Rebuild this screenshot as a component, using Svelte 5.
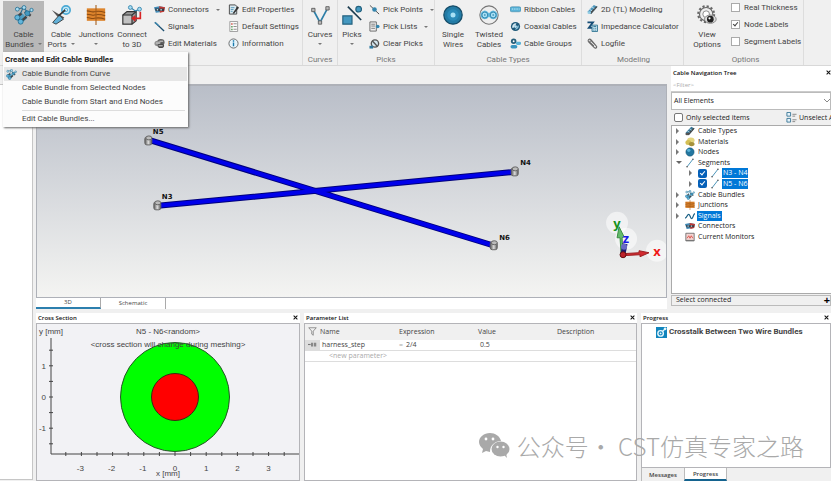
<script lang="ts">
	type TreeRow = {
		label: string;
		icon: string;
		arrow?: 'open' | 'closed';
		child?: boolean;
		selected?: boolean;
	};

	const menuItems = [
		{ label: 'Cable Bundle from Curve', icon: 'bundle', active: true },
		{ label: 'Cable Bundle from Selected Nodes' },
		{ label: 'Cable Bundle from Start and End Nodes' }
	];

	const rows: TreeRow[] = [
		{ label: 'Cable Types', icon: 'types', arrow: 'closed' },
		{ label: 'Materials', icon: 'gold', arrow: 'closed' },
		{ label: 'Nodes', icon: 'ball', arrow: 'closed' },
		{ label: 'Segments', icon: 'segment', arrow: 'open' },
		{ label: 'N3 - N4', icon: 'segment', arrow: 'closed', child: true, selected: true },
		{ label: 'N5 - N6', icon: 'segment', arrow: 'closed', child: true, selected: true },
		{ label: 'Cable Bundles', icon: 'bundle', arrow: 'closed' },
		{ label: 'Junctions', icon: 'junction', arrow: 'closed' },
		{ label: 'Signals', icon: 'wave', arrow: 'closed', selected: true },
		{ label: 'Connectors', icon: 'connector' },
		{ label: 'Current Monitors', icon: 'monitor' }
	];

	const nodes = [
		{ name: 'N5', x: 112, y: 55, lx: 116, ly: 48 },
		{ name: 'N3', x: 121, y: 120, lx: 125, ly: 113 },
		{ name: 'N4', x: 479, y: 86, lx: 484, ly: 79 },
		{ name: 'N6', x: 458, y: 160, lx: 463, ly: 154 }
	];

	const unit = 31.2;
	const xTicks = Array.from({ length: 15 }, (_, i) => (i - 7) / 2);
	const yTicks = Array.from({ length: 7 }, (_, i) => (i - 3) / 2);
	const xLabels = [-3, -2, -1, 0, 1, 2, 3];
	const yLabels = [1, 0, -1];

	let filter = $state('');
	let onlySelected = $state(false);
	let checks = $state([
		{ label: 'Real Thickness', on: false },
		{ label: 'Node Labels', on: true },
		{ label: 'Segment Labels', on: false }
	]);
</script>

{#snippet icon(name: string)}
	<svg class="icon" viewBox="0 0 24 24" fill="none" aria-hidden="true">
		{#if name === 'bundle'}
			<path d="M2 17l8-7 6 6-7 6z" fill="#4f9fc4" />
			<path d="M3 15l6-5M7 21l8-7M13 8l7 5" stroke="#444" stroke-width="3" />
			<circle cx="4" cy="15" r="3" fill="#62b6dc" stroke="#276f92" />
			<circle cx="8" cy="20" r="3" fill="#62b6dc" stroke="#276f92" />
			<path d="M4 5l7-2 6 6 5-3M8 10l3-7" stroke="#276f92" stroke-width="1.3" />
			<circle cx="4" cy="5" r="2.3" fill="#a9dcf2" stroke="#276f92" />
			<circle cx="12" cy="3" r="2.3" fill="#a9dcf2" stroke="#276f92" />
			<circle cx="16" cy="10" r="3" fill="#4499c0" stroke="#276f92" />
			<circle cx="21" cy="6" r="2" fill="#a9dcf2" stroke="#276f92" />
		{:else if name === 'ports'}
			<circle cx="18" cy="6" r="5" fill="#c7e9f7" stroke="#4aa9d4" stroke-width="2" />
			<circle cx="18" cy="6" r="2" stroke="#4aa9d4" />
			<path d="M1 6l15 9-4 4z" fill="#555" />
			<path d="M2 21l8-9 5 5-9 6z" fill="#62b1d8" stroke="#333" />
			<path d="M9 13l8-7" stroke="#333" stroke-width="2" />
		{:else if name === 'junction'}
			<path d="M1 4h22v15H1z" fill="#dd842c" />
			<path d="M1 7c5 0 5 2 9 1s7-1 13 1M1 11c5 0 5 2 9 1s7-1 13 1M1 15c5 0 5 2 9 1s7-1 13 1" stroke="#8d4c12" stroke-width="1.3" />
			<path d="M12 0v24" stroke="#a65f1c" stroke-width="1.3" />
		{:else if name === 'connect3d'}
			<path d="M1 12l5-4h11v11l-5 4H1z" fill="#999" stroke="#333" stroke-width="1.4" />
			<path d="M1 12h11v11M12 12l5-4" stroke="#333" stroke-width="1.4" />
			<path d="M2 13h9v9H2z" fill="#c1c1c1" />
			<path d="M10 3l6 4 6-2" stroke="#2d7fa8" stroke-width="1.3" />
			<path d="M22 8v8h-7" stroke="#d82424" stroke-width="2" />
			<path d="M16 12v8l-5-4z" fill="#d82424" />
			<circle cx="10" cy="3" r="2.3" fill="#a9dcf2" stroke="#2d7fa8" />
			<circle cx="21" cy="5" r="2.3" fill="#a9dcf2" stroke="#2d7fa8" />
		{:else if name === 'connector'}
			<path d="M0 7l12-2 12 2-3 10-17 2z" fill="#3f89b5" />
			<path d="M11 5l13 2-2 10-9 2z" fill="#c43a34" />
			<path d="M2 10h20v5H4z" fill="#343c46" />
			<path d="M6 11h3v3H6zM14 11h3v3h-3z" fill="#b9d8e7" />
		{:else if name === 'line'}
			<path d="M2 3l20 19" stroke="#1c4f70" stroke-width="3" />
			<path d="M2 3l9 8" stroke="#3d85ac" stroke-width="3" />
		{:else if name === 'material'}
			<ellipse cx="15" cy="9" rx="8" ry="7" fill="#616161" />
			<ellipse cx="8" cy="12" rx="7" ry="6" fill="#8e8e8e" />
			<ellipse cx="15" cy="17" rx="7" ry="5" fill="#4b4b4b" />
			<path d="M4 11h9M10 17h9M12 7h8" stroke="#ddd" stroke-width="2" />
		{:else if name === 'edit'}
			<path d="M3 2h13l3 3v17H3z" fill="#d9e8ef" stroke="#444" stroke-width="2" />
			<path d="M6 8h8M6 12h6M6 16h4" stroke="#5498b9" stroke-width="2" />
			<path d="M10 20l11-15 3 3-11 13z" fill="#333" />
		{:else if name === 'settings'}
			<path d="M4 1h17v22H4z" fill="#fafafa" stroke="#999" stroke-width="2" />
			<path d="M12 6h7M12 12h7M12 18h7" stroke="#888" stroke-width="2" />
			<path d="M7 5h3v3H7z" fill="#cc4438" /><path d="M7 11h3v3H7zM7 17h3v3H7z" fill="#4f944d" />
		{:else if name === 'info'}
			<circle cx="12" cy="12" r="10" fill="#e5f3fa" stroke="#666" stroke-width="2" />
			<path d="M12 10v8M12 5v3" stroke="#1679ad" stroke-width="3" />
		{:else if name === 'curves'}
			<path d="M4 6l8 15 9-17" stroke="#2d7fa8" stroke-width="2" />
			<path d="M2 4h4v4H2zM10 19h4v4h-4zM19 2h4v4h-4z" fill="#bbb" stroke="#555" />
		{:else if name === 'picks'}
			<path d="M1 13h11v10H1z" fill="#4498c0" stroke="#24627f" stroke-width="1.4" />
			<path d="M7 2l16 16" stroke="#1d3d50" stroke-width="2" />
			<circle cx="20" cy="5" r="3.4" fill="#4498c0" stroke="#24627f" stroke-width="1.4" />
		{:else if name === 'pickpoint'}
			<path d="M2 3l20 19" stroke="#444" stroke-width="2" />
			<circle cx="12" cy="12" r="5" fill="#3485ad" />
		{:else if name === 'picklist'}
			<path d="M2 2h14v20H2z" fill="#eee" stroke="#666" stroke-width="2" />
			<path d="M5 7h8M5 11h8M5 16h8" stroke="#777" stroke-width="2" />
			<circle cx="19" cy="12" r="4" fill="#3485ad" />
		{:else if name === 'clear'}
			<circle cx="13" cy="12" r="8" fill="#d5e6ee" stroke="#555" stroke-width="3" />
			<path d="M7 6l12 13" stroke="#555" stroke-width="3" />
			<path d="M1 17h8v6H1z" fill="#2e78a0" />
		{:else if name === 'single'}
			<circle cx="12" cy="12" r="11" fill="#237ba5" stroke="#164d69" stroke-width="1.5" />
			<circle cx="12" cy="12" r="7" fill="#2b8bb9" />
			<circle cx="12" cy="12" r="3" fill="#a8e0f5" />
		{:else if name === 'twisted'}
			<circle cx="12" cy="12" r="11" fill="#eee" stroke="#777" stroke-width="1.3" />
			<path d="M2 10q5-7 10 0 5-7 10 0v4q-5 6-10 0-5 6-10 0z" fill="#62b8dc" />
			<circle cx="7" cy="12" r="3.5" fill="#a8e0f5" stroke="#237ba5" />
			<circle cx="17" cy="12" r="3.5" fill="#a8e0f5" stroke="#237ba5" />
			<circle cx="7" cy="12" r="1" fill="#237ba5" /><circle cx="17" cy="12" r="1" fill="#237ba5" />
		{:else if name === 'ribbon'}
			<rect x="0" y="6" width="24" height="11" rx="4" fill="#59b2d7" stroke="#2a7497" />
			<path d="M4 11h3M9 11h3M14 11h3M19 11h2" stroke="#c9effb" stroke-width="2" />
		{:else if name === 'coax'}
			<circle cx="12" cy="12" r="10" fill="#1e5979" />
			<path d="M5 15a8 8 0 0 1 9-10l-2 4a4 4 0 0 0-3 5z" fill="#d5e8f0" />
			<path d="M19 9a8 8 0 0 1-8 10l2-4a4 4 0 0 0 3-4z" fill="#8cc3dc" />
			<circle cx="12" cy="12" r="3" fill="#bfe6f5" />
		{:else if name === 'groups'}
			<circle cx="8" cy="7" r="6" fill="#265f7c" /><circle cx="8" cy="7" r="2" fill="#fff" />
			<rect x="13" y="8" width="11" height="7" rx="3" fill="#59b2d7" />
			<rect x="1" y="15" width="15" height="8" rx="4" fill="#3995c0" />
		{:else if name === 'tl' || name === 'types'}
			<path d="M1 17L15 2l8 4L9 22z" fill={name === 'tl' ? '#4c96bc' : '#3a7797'} />
			<path d="M9 22L23 6l-3-1L5 20z" fill="#4a4a4a" />
			<path d="M5 11l6 4M10 6l6 4" stroke="#b8ddec" stroke-width="2" />
			<ellipse cx="5" cy="19" rx="4" ry="3" fill={name === 'tl' ? '#92cce4' : '#555'} />
		{:else if name === 'impedance'}
			<path d="M1 3h12L4 15h8" stroke="#164d76" stroke-width="4" />
			<path d="M11 9h12v14H11z" fill="#bfe0ed" stroke="#337694" stroke-width="2" />
			<path d="M14 12h6M14 16h2M18 16h2M14 20h2M18 20h2" stroke="#337694" stroke-width="2" />
		{:else if name === 'clip'}
			<path d="M20 17L9 4C5 0 0 5 4 9l12 12c3 3 7-1 4-4L10 7c-2-2-5 0-3 3l8 8" stroke="#666" stroke-width="2.4" />
		{:else if name === 'gear'}
			<circle cx="11" cy="11" r="9.5" stroke="#666" stroke-width="2.6" stroke-dasharray="2.6 2.4" />
			<circle cx="11" cy="11" r="8" fill="#eee" stroke="#666" stroke-width="1.4" />
			<circle cx="11" cy="11" r="4" fill="#fff" stroke="#777" />
			<ellipse cx="16" cy="17" rx="7" ry="5" fill="#ddd" stroke="#777" />
			<circle cx="16" cy="17" r="4" fill="#222" /><circle cx="15" cy="16" r="1.3" fill="#fff" />
		{:else if name === 'gold'}
			<ellipse cx="14" cy="8" rx="9" ry="7" fill="#e3d580" />
			<ellipse cx="8" cy="13" rx="7" ry="6" fill="#d4bf54" />
			<ellipse cx="16" cy="17" rx="7" ry="5" fill="#a6923c" />
		{:else if name === 'ball'}
			<circle cx="12" cy="12" r="10" fill="#23769f" stroke="#164d69" />
			<circle cx="9" cy="8" r="4" fill="#5bb4da" />
		{:else if name === 'segment'}
			<path d="M5 21L19 3" stroke="#2a81ac" stroke-width="2" />
			<circle cx="5" cy="21" r="2" fill="#555" /><circle cx="19" cy="3" r="2" fill="#555" />
		{:else if name === 'wave'}
			<path d="M0 17c5 0 5-9 9-9s3 10 7 10 3-10 8-12" stroke="#175e84" stroke-width="3" />
		{:else if name === 'monitor'}
			<path d="M2 3h20v18H2z" fill="#f3d6d3" stroke="#666" stroke-width="2" />
			<path d="M5 15l4-6 3 6 3-6 4 6" stroke="#d9443d" stroke-width="2" />
			<path d="M2 19h20v3H2z" fill="#777" />
		{:else if name === 'project'}
			<path d="M0 0h24v24H0z" fill="#1185bd" />
			<circle cx="10" cy="14" r="6" stroke="#e7f7fd" stroke-width="3" />
			<circle cx="10" cy="14" r="2" fill="#e7f7fd" />
			<path d="M15 9l5-5" stroke="#e7f7fd" stroke-width="3" /><circle cx="20" cy="4" r="3" fill="#e7f7fd" />
		{:else if name === 'funnel'}
			<path d="M2 2h20l-8 9v11l-4-3v-8z" stroke="#777" stroke-width="2" />
		{:else if name === 'param'}
			<path d="M0 12h7" stroke="#777" stroke-width="3" />
			<path d="M8 7h6v10H8zM16 7h6v10h-6z" fill="#888" />
		{:else if name === 'unselect'}
			<path d="M2 1h8v8H2zM2 14h8v8H2z" fill="#e5f3fa" stroke="#3a7797" stroke-width="2" />
			<path d="M14 5h9M14 9h6M14 17h9M14 21h6" stroke="#666" stroke-width="1.6" />
		{:else if name === 'close'}
			<path d="M3 3l18 18M21 3L3 21" stroke="#111" stroke-width="5" />
		{/if}
	</svg>
{/snippet}

{#snippet big(name: string, first: string, second = '', menu = false, pressed = false)}
	<button class="big" class:pressed>
		{@render icon(name)}
		<span>{first}</span>
		<span class="second" class:lone={!second}>{second}{#if menu}<i class="caret"></i>{/if}</span>
	</button>
{/snippet}

{#snippet small(name: string, label: string, menu = false)}
	<button class="small">
		{@render icon(name)}
		<span>{label}</span>
		{#if menu}<i class="caret"></i>{/if}
	</button>
{/snippet}

{#snippet panelTitle(text: string)}
	<header class="panel-title">
		<h2>{text}</h2>
		<button class="close" aria-label="Close {text}">{@render icon('close')}</button>
	</header>
{/snippet}

<div class="app">
	<nav class="ribbon" aria-label="Ribbon">
		<section class="group edit">
			<div class="tools">
				{@render big('bundle', 'Cable', 'Bundles', true, true)}
				{@render big('ports', 'Cable', 'Ports', true)}
				{@render big('junction', 'Junctions', '', true)}
				{@render big('connect3d', 'Connect', 'to 3D')}
				<div class="stack">
					{@render small('connector', 'Connectors', true)}
					{@render small('line', 'Signals')}
					{@render small('material', 'Edit Materials')}
				</div>
				<div class="stack">
					{@render small('edit', 'Edit Properties')}
					{@render small('settings', 'Default Settings')}
					{@render small('info', 'Information')}
				</div>
			</div>
			<div class="menu">
				<h3>Create and Edit Cable Bundles</h3>
				{#each menuItems as item}
					<button class:active={item.active}>
						<span class="slot">{#if item.icon}{@render icon(item.icon)}{/if}</span>
						{item.label}
					</button>
				{/each}
				<hr />
				<button><span class="slot"></span>Edit Cable Bundles...</button>
			</div>
		</section>
		<section class="group curves">
			<div class="tools">{@render big('curves', 'Curves', '', true)}</div>
			<p>Curves</p>
		</section>
		<section class="group picks">
			<div class="tools">
				{@render big('picks', 'Picks', '', true)}
				<div class="stack">
					{@render small('pickpoint', 'Pick Points', true)}
					{@render small('picklist', 'Pick Lists', true)}
					{@render small('clear', 'Clear Picks')}
				</div>
			</div>
			<p>Picks</p>
		</section>
		<section class="group cables">
			<div class="tools">
				{@render big('single', 'Single', 'Wires')}
				{@render big('twisted', 'Twisted', 'Cables')}
				<div class="stack">
					{@render small('ribbon', 'Ribbon Cables')}
					{@render small('coax', 'Coaxial Cables')}
					{@render small('groups', 'Cable Groups')}
				</div>
			</div>
			<p>Cable Types</p>
		</section>
		<section class="group modeling">
			<div class="tools">
				<div class="stack">
					{@render small('tl', '2D (TL) Modeling')}
					{@render small('impedance', 'Impedance Calculator')}
					{@render small('clip', 'Logfile')}
				</div>
			</div>
			<p>Modeling</p>
		</section>
		<section class="group options">
			<div class="tools">
				{@render big('gear', 'View', 'Options')}
				<div class="stack checks">
					{#each checks as check}
						<label><input type="checkbox" bind:checked={check.on} />{check.label}</label>
					{/each}
				</div>
			</div>
			<p>Options</p>
		</section>
	</nav>

	<div class="workspace">
		<aside class="rail"></aside>
		<div class="docks">
			<div class="upper">
				<main class="view">
					<svg class="scene" viewBox="0 0 630 211" role="img" aria-label="Wire model">
						<defs>
							<linearGradient id="metal"><stop stop-color="#555" /><stop offset=".5" stop-color="#ddd" /><stop offset="1" stop-color="#555" /></linearGradient>
						</defs>
						<path d="M112 54L458 160M121 120L479 86" stroke="#00007c" stroke-width="6" />
						<path d="M112 54L458 160M121 120L479 86" stroke="#0000ea" stroke-width="4" />
						{#each nodes as n}
							<rect x={n.x - 4} y={n.y - 4} width="7" height="8" rx="2" fill="url(#metal)" stroke="#666" />
							<ellipse cx={n.x} cy={n.y - 3} rx="3" ry="2" fill="#bbb" stroke="#666" />
							<text class="node" x={n.lx} y={n.ly}>{n.name}</text>
						{/each}
						<g fill="#fff" fill-opacity=".55">
							<circle cx="581" cy="137" r="11" /><circle cx="590" cy="153" r="11" /><circle cx="621" cy="165" r="11" />
						</g>
						<path d="M585 168l-1-16h-3l2-11 5 10-2 1 1 16z" fill="#63ba6a" stroke="#3b8d43" />
						<path d="M587 168l2-10" stroke="#1c1c70" stroke-width="5" />
						<circle cx="588" cy="161" r="3" fill="#6869c5" />
						<path d="M586 168l17-1v-2l10 2-9 4v-2l-18 1z" fill="#d22a30" stroke="#9b2023" />
						<circle cx="587" cy="169" r="3" fill="#bd2029" stroke="#621014" />
						<text class="axis y" x="581" y="142">y</text>
						<text class="axis z" x="590" y="157">z</text>
						<text class="axis x" x="621" y="170">x</text>
					</svg>
					<div class="view-tabs">
						<button class="on">3D</button>
						<button>Schematic</button>
					</div>
				</main>

				<aside class="tree-panel">
					{@render panelTitle('Cable Navigation Tree')}
					<input class="filter" aria-label="Filter" placeholder="<Filter>" bind:value={filter} />
					<select aria-label="Elements">
						<option>All Elements</option>
					</select>
					<div class="only">
						<label><input type="checkbox" bind:checked={onlySelected} />Only selected items</label>
						<button>{@render icon('unselect')}Unselect All</button>
					</div>
					<div class="tree-box">
						<ul>
							{#each rows as row}
								<li class:child={row.child}>
									<i class="twist {row.arrow ?? ''}"></i>
									{#if row.child}
										<input type="checkbox" class="blue" checked aria-label={row.label} />
									{/if}
									{@render icon(row.icon)}
									<span class:selected={row.selected}>{row.label}</span>
								</li>
							{/each}
						</ul>
					</div>
					<div class="connected">
						<span>Select connected</span>
						<button aria-label="Expand">+</button>
					</div>
				</aside>
			</div>

			<div class="lower">
				<section class="panel cross">
					{@render panelTitle('Cross Section')}
					<div class="panel-body">
						<svg class="plot" viewBox="0 0 262 156" role="img" aria-label="Cross section of N5 - N6">
							<circle cx="138" cy="73" r="54.5" fill="#0f0" stroke="#275327" />
							<circle cx="138" cy="73" r="23.5" fill="#f00" stroke="#3b2b13" />
							<path d="M14 14V130H262" fill="none" stroke="#444" />
							{#each xTicks as t}
								<path d="M{138 + t * unit} 128v4" stroke="#444" />
							{/each}
							{#each yTicks as t}
								<path d="M12 {73 - t * unit}h4" stroke="#444" />
							{/each}
							{#each xLabels as l}
								<text x={138 + l * unit - (l < 0 ? 1 : 0)} y="147" text-anchor="middle">{l}</text>
							{/each}
							{#each yLabels as l}
								<text x="9" y={76 - l * unit} text-anchor="end">{l}</text>
							{/each}
							<text x="2" y="10">y [mm]</text>
							<text x="131" y="152" text-anchor="middle">x [mm]</text>
							<text x="131" y="10" text-anchor="middle">N5 - N6&lt;random&gt;</text>
							<text x="131" y="23" text-anchor="middle">&lt;cross section will change during meshing&gt;</text>
						</svg>
					</div>
				</section>

				<section class="panel params">
					{@render panelTitle('Parameter List')}
					<div class="panel-body white">
						<table>
							<thead>
								<tr>
									<th class="mark">{@render icon('funnel')}</th>
									<th>Name</th>
									<th>Expression</th>
									<th>Value</th>
									<th>Description</th>
								</tr>
							</thead>
							<tbody>
								<tr>
									<td class="mark grey">{@render icon('param')}</td>
									<td class="name">harness_step</td>
									<td class="expr"><span class="eq">=</span>2/4</td>
									<td class="name">0.5</td>
									<td></td>
								</tr>
								<tr>
									<td></td>
									<td class="new" colspan="4">&lt;new parameter&gt;</td>
								</tr>
							</tbody>
						</table>
					</div>
				</section>

				<section class="panel progress">
					{@render panelTitle('Progress')}
					<div class="panel-body white">
						<p class="job">{@render icon('project')}Crosstalk Between Two Wire Bundles</p>
					</div>
					<div class="dock-tabs">
						<button>Messages</button>
						<button class="on">Progress</button>
					</div>
				</section>
			</div>
		</div>
	</div>

	<div class="watermark">
		<svg viewBox="0 0 31 26" aria-hidden="true">
			<path d="M11 0C5 0 0 4 0 9c0 3 2 5 4 7l-1 4 4-2 4 1c0-7 5-11 11-11C21 3 16 0 11 0z" fill="#a9a9a9" />
			<ellipse cx="21.5" cy="16" rx="9" ry="7.5" fill="#a9a9a9" />
			<path d="M24 21l4 4-1-5z" fill="#a9a9a9" />
			<g fill="#fff"><circle cx="7" cy="6" r="1.4" /><circle cx="14" cy="6" r="1.4" /><circle cx="18.5" cy="14" r="1.2" /><circle cx="24.5" cy="14" r="1.2" /></g>
		</svg>
		<span>公众号· CST仿真专家之路</span>
	</div>
</div>

<style>
	:global(body) {
		margin: 0;
		background: #f0f0f0;
	}

	.app {
		position: relative;
		display: flex;
		flex-direction: column;
		min-height: 100vh;
		overflow: hidden;
		background: #f0f0f0;
		color: #444;
		font: 7px/10px 'Open Sans', 'Noto Sans', sans-serif;
	}

	button,
	input,
	select {
		margin: 0;
		padding: 0;
		border: 0;
		border-radius: 0;
		background: none;
		color: inherit;
		font: inherit;
		white-space: nowrap;
	}

	h2,
	h3,
	p,
	ul {
		margin: 0;
		padding: 0;
	}

	.icon {
		flex: none;
		width: 11px;
		height: 11px;
	}

	.caret {
		display: inline-block;
		margin-left: 4px;
		border: 2px solid transparent;
		border-top-color: #777;
		border-bottom: 0;
		vertical-align: 2px;
	}

	.lone .caret {
		margin-left: 0;
	}

	/* ribbon */
	.ribbon {
		display: flex;
		height: 65px;
		border-bottom: 1px solid #d8d8d8;
		font-family: Roboto, 'Open Sans', sans-serif;
		font-size: 8px;
	}

	.group {
		position: relative;
		display: flex;
		flex: none;
		flex-direction: column;
		box-sizing: border-box;
		border-right: 1px solid #ddd;
	}

	.group p {
		margin-top: auto;
		color: #777;
		text-align: center;
	}

	.tools {
		display: flex;
		padding-top: 1px;
	}

	.group.edit { width: 303px; padding-left: 3px; }
	.group.curves { width: 35px; }
	.group.picks { width: 97px; }
	.group.cables { width: 147px; }
	.group.modeling { width: 102px; padding-left: 2px; }
	.group.options { width: 120px; padding-left: 4px; }

	.big {
		display: flex;
		flex-direction: column;
		align-items: center;
		box-sizing: border-box;
		width: 36px;
		height: 51px;
		padding-top: 4px;
	}

	.big .icon {
		width: 20px;
		height: 20px;
		margin-bottom: 5px;
	}

	.curves .big {
		width: 34px;
	}

	.picks .big {
		width: 28px;
	}

	.options .big {
		width: 38px;
	}

	.big.pressed {
		width: 41px;
		background: #b8b8b8;
	}

	.pressed + .big {
		width: 34px;
	}

	.second {
		height: 10px;
	}

	.stack {
		display: flex;
		flex-direction: column;
		margin-left: 3px;
	}

	.edit .stack {
		width: 74px;
		margin-left: 4px;
	}

	.edit .stack + .stack {
		margin-left: 0;
	}

	.small,
	.checks label {
		display: flex;
		align-items: center;
		gap: 3px;
		height: 17px;
	}

	.checks label {
		gap: 4px;
	}

	.checks {
		margin-top: -2px;
		margin-left: 5px;
	}

	input[type='checkbox'] {
		flex: none;
		box-sizing: border-box;
		width: 9px;
		height: 9px;
		border: 1px solid #aaa;
		background: #fff;
		appearance: none;
	}

	.checks input:checked::after {
		display: block;
		width: 2px;
		height: 4px;
		margin-left: 2px;
		border: solid #444;
		border-width: 0 1px 1px 0;
		content: '';
		transform: rotate(40deg);
	}

	.menu {
		position: absolute;
		z-index: 2;
		top: 52px;
		left: 3px;
		box-sizing: border-box;
		width: 185px;
		padding: 1px;
		background: #fcfcfc;
		box-shadow: 1px 1px 2px #666;
	}

	.menu h3 {
		padding: 0 1px;
		color: #222;
		font-size: 8px;
		font-weight: bold;
		line-height: 14px;
	}

	.menu button {
		display: flex;
		align-items: center;
		width: 100%;
		height: 14px;
	}

	.menu .slot {
		display: flex;
		width: 18px;
	}

	.menu .icon {
		margin-left: 2px;
	}

	.menu .active {
		background: #e6e6e6;
	}

	.menu hr {
		margin: 1px 2px 1px 18px;
		border: 0;
		border-top: 1px solid #ddd;
	}

	/* docks */
	.workspace {
		display: flex;
		flex: 1;
	}

	.rail {
		flex: none;
		box-sizing: border-box;
		width: 33px;
		margin: 18px 3px 1px 0;
		border: 1px solid #c6c6c6;
		border-left: 0;
		background: #fff;
	}

	.docks {
		display: flex;
		flex: 1;
		flex-direction: column;
		gap: 4px;
		min-width: 0;
	}

	.upper {
		display: flex;
		gap: 4px;
	}

	.view {
		flex: 1;
		min-width: 0;
		margin-top: 18px;
	}

	.scene {
		display: block;
		box-sizing: border-box;
		width: 100%;
		border: solid #aeb1b8;
		border-width: 2px 1px 1px;
		background: linear-gradient(#b9bec8, #f4f4f2);
	}

	.node {
		fill: #111;
		font: bold 7px 'DejaVu Sans', sans-serif;
	}

	.axis {
		font: bold 13px 'Open Sans', sans-serif;
		text-anchor: middle;
	}

	.axis.x { fill: #f01818; }
	.axis.y { fill: #16921c; }
	.axis.z { fill: #1818e4; }

	.view-tabs {
		display: flex;
		background: #fff;
		font-size: 6px;
	}

	.view-tabs button {
		box-sizing: border-box;
		width: 65px;
		height: 11px;
		border-right: 1px solid #aaa;
		line-height: 9px;
	}

	.view-tabs .on {
		border-bottom: 2px solid #2c7fae;
	}

	.panel-title {
		display: flex;
		align-items: center;
		justify-content: space-between;
		height: 10px;
		padding: 0 2px;
		background: #fff;
		color: #111;
	}

	.panel-title h2 {
		font-size: 6px;
		font-weight: 600;
		line-height: 10px;
	}

	.close {
		display: flex;
	}

	.close .icon {
		width: 5px;
		height: 5px;
	}

	.tree-panel {
		display: flex;
		flex: none;
		flex-direction: column;
		width: 160px;
		overflow: hidden;
		color: #222;
	}

	.tree-panel .panel-title {
		height: 13px;
		padding-right: 0;
	}

	.filter {
		height: 12px;
		border-bottom: 1px solid #ccc;
		background: #fff;
		text-indent: 2px;
		font-size: 6px;
	}

	.filter::placeholder {
		color: #aaa;
	}

	select {
		height: 18px;
		border: 1px solid #bbb;
		background: #fff
			url("data:image/svg+xml,%3Csvg xmlns='http://www.w3.org/2000/svg' width='6' height='4'%3E%3Cpath d='M0 0l3 3 3-3' fill='none' stroke='%23888'/%3E%3C/svg%3E")
			no-repeat right center;
		text-indent: 2px;
		appearance: none;
	}

	.only {
		display: flex;
		align-items: center;
		justify-content: space-between;
		height: 15px;
		padding-left: 3px;
	}

	.only label,
	.only button {
		display: flex;
		align-items: center;
		gap: 3px;
	}

	.only button {
		flex: none;
		gap: 2px;
		margin-right: -6px;
	}

	.tree-panel input[type='checkbox'] {
		border-color: #777;
		border-radius: 2px;
	}

	.tree-panel input.blue {
		width: 9px;
		height: 9px;
		margin: 0 3px 0 2px;
		border: 0;
		background: #0560b8;
	}

	.blue::after {
		display: block;
		width: 2px;
		height: 4px;
		margin: 1px 3px;
		border: solid #fff;
		border-width: 0 1px 1px 0;
		content: '';
		transform: rotate(40deg);
	}

	.tree-box {
		flex: 1;
		border: 1px solid #aaa;
		border-right: 0;
		background: #fff;
	}

	.tree-box ul {
		display: grid;
		grid-auto-rows: 1fr;
		height: 116px;
		list-style: none;
	}

	.tree-box li {
		display: flex;
		align-items: center;
		min-height: 0;
		padding-left: 4px;
	}

	.tree-box li.child {
		padding-left: 17px;
	}

	.tree-box .icon {
		width: 10px;
		height: 10px;
		margin-right: 2px;
	}

	.tree-box span {
		padding: 0 1px;
	}

	.tree-box .selected {
		background: #0078d7;
		color: #fff;
	}

	.twist {
		box-sizing: border-box;
		width: 5px;
		height: 6px;
		margin-right: 4px;
		flex: none;
	}

	.closed {
		border: 3px solid transparent;
		border-right: 0;
		border-left: 3px solid #777;
	}

	.twist.closed {
		width: 3px;
		margin-right: 6px;
	}

	.child .twist.closed {
		margin-right: 4px;
	}

	.twist.open {
		width: 6px;
		height: 3px;
		margin-right: 3px;
		border: 3px solid transparent;
		border-top-color: #666;
		border-bottom: 0;
	}

	.connected {
		display: flex;
		align-items: center;
		justify-content: space-between;
		height: 9px;
		margin: 1px 0 3px;
		padding-left: 4px;
		border: 1px solid #bbb;
	}

	.connected button {
		color: #000;
		font-size: 11px;
		font-weight: bold;
	}

	.lower {
		display: grid;
		flex: 1;
		grid-template-columns: 264fr 333fr 190fr;
		gap: 4px;
	}

	.panel {
		display: flex;
		flex-direction: column;
		min-width: 0;
	}

	.panel-body {
		flex: 1;
		box-sizing: border-box;
		border: 1px solid #b4b4b8;
		background: #f2f2f5;
	}

	.panel-body.white {
		background: #fff;
	}

	.plot {
		display: block;
		width: 100%;
	}

	.plot text {
		fill: #444;
		font: 8px 'Liberation Sans', Arial, sans-serif;
	}

	table {
		width: 100%;
		border-collapse: collapse;
		table-layout: fixed;
	}

	th,
	td {
		height: 10px;
		padding: 0;
		border-bottom: 1px solid #ddd;
		font-weight: normal;
		text-align: left;
	}

	th {
		height: 16px;
		border: 0;
		background: #f0f0f0;
	}

	th.mark {
		width: 15px;
	}

	td.name {
		padding-left: 2px;
	}

	td.expr {
		padding-left: 0;
	}

	.mark .icon {
		display: block;
		width: 9px;
		height: 9px;
		margin: 0 auto;
	}

	.grey {
		background: #ddd;
	}

	td.new {
		padding-left: 9px;
		color: #aaa;
	}

	.eq {
		margin-right: 3px;
		color: #aaa;
	}

	.job {
		display: flex;
		align-items: center;
		gap: 2px;
		padding: 3px 0 0 14px;
		font: bold 8px/10px Roboto, 'Open Sans', sans-serif;
		white-space: nowrap;
	}

	.dock-tabs {
		display: flex;
		height: 13px;
		font-size: 6px;
		font-weight: 600;
	}

	.dock-tabs button {
		width: 43px;
		border-left: 1px solid #bbb;
	}

	.dock-tabs .on {
		box-sizing: border-box;
		border-right: 1px solid #bbb;
		border-bottom: 2px solid #14638f;
		background: #fff;
	}

	.watermark {
		position: absolute;
		right: 27px;
		bottom: 20px;
		display: flex;
		align-items: center;
		gap: 7px;
		color: #a9a9a9;
		font: 300 24px/30px 'Noto Sans CJK SC', sans-serif;
		pointer-events: none;
		white-space: nowrap;
	}

	.watermark svg {
		width: 31px;
		height: 26px;
	}
</style>
